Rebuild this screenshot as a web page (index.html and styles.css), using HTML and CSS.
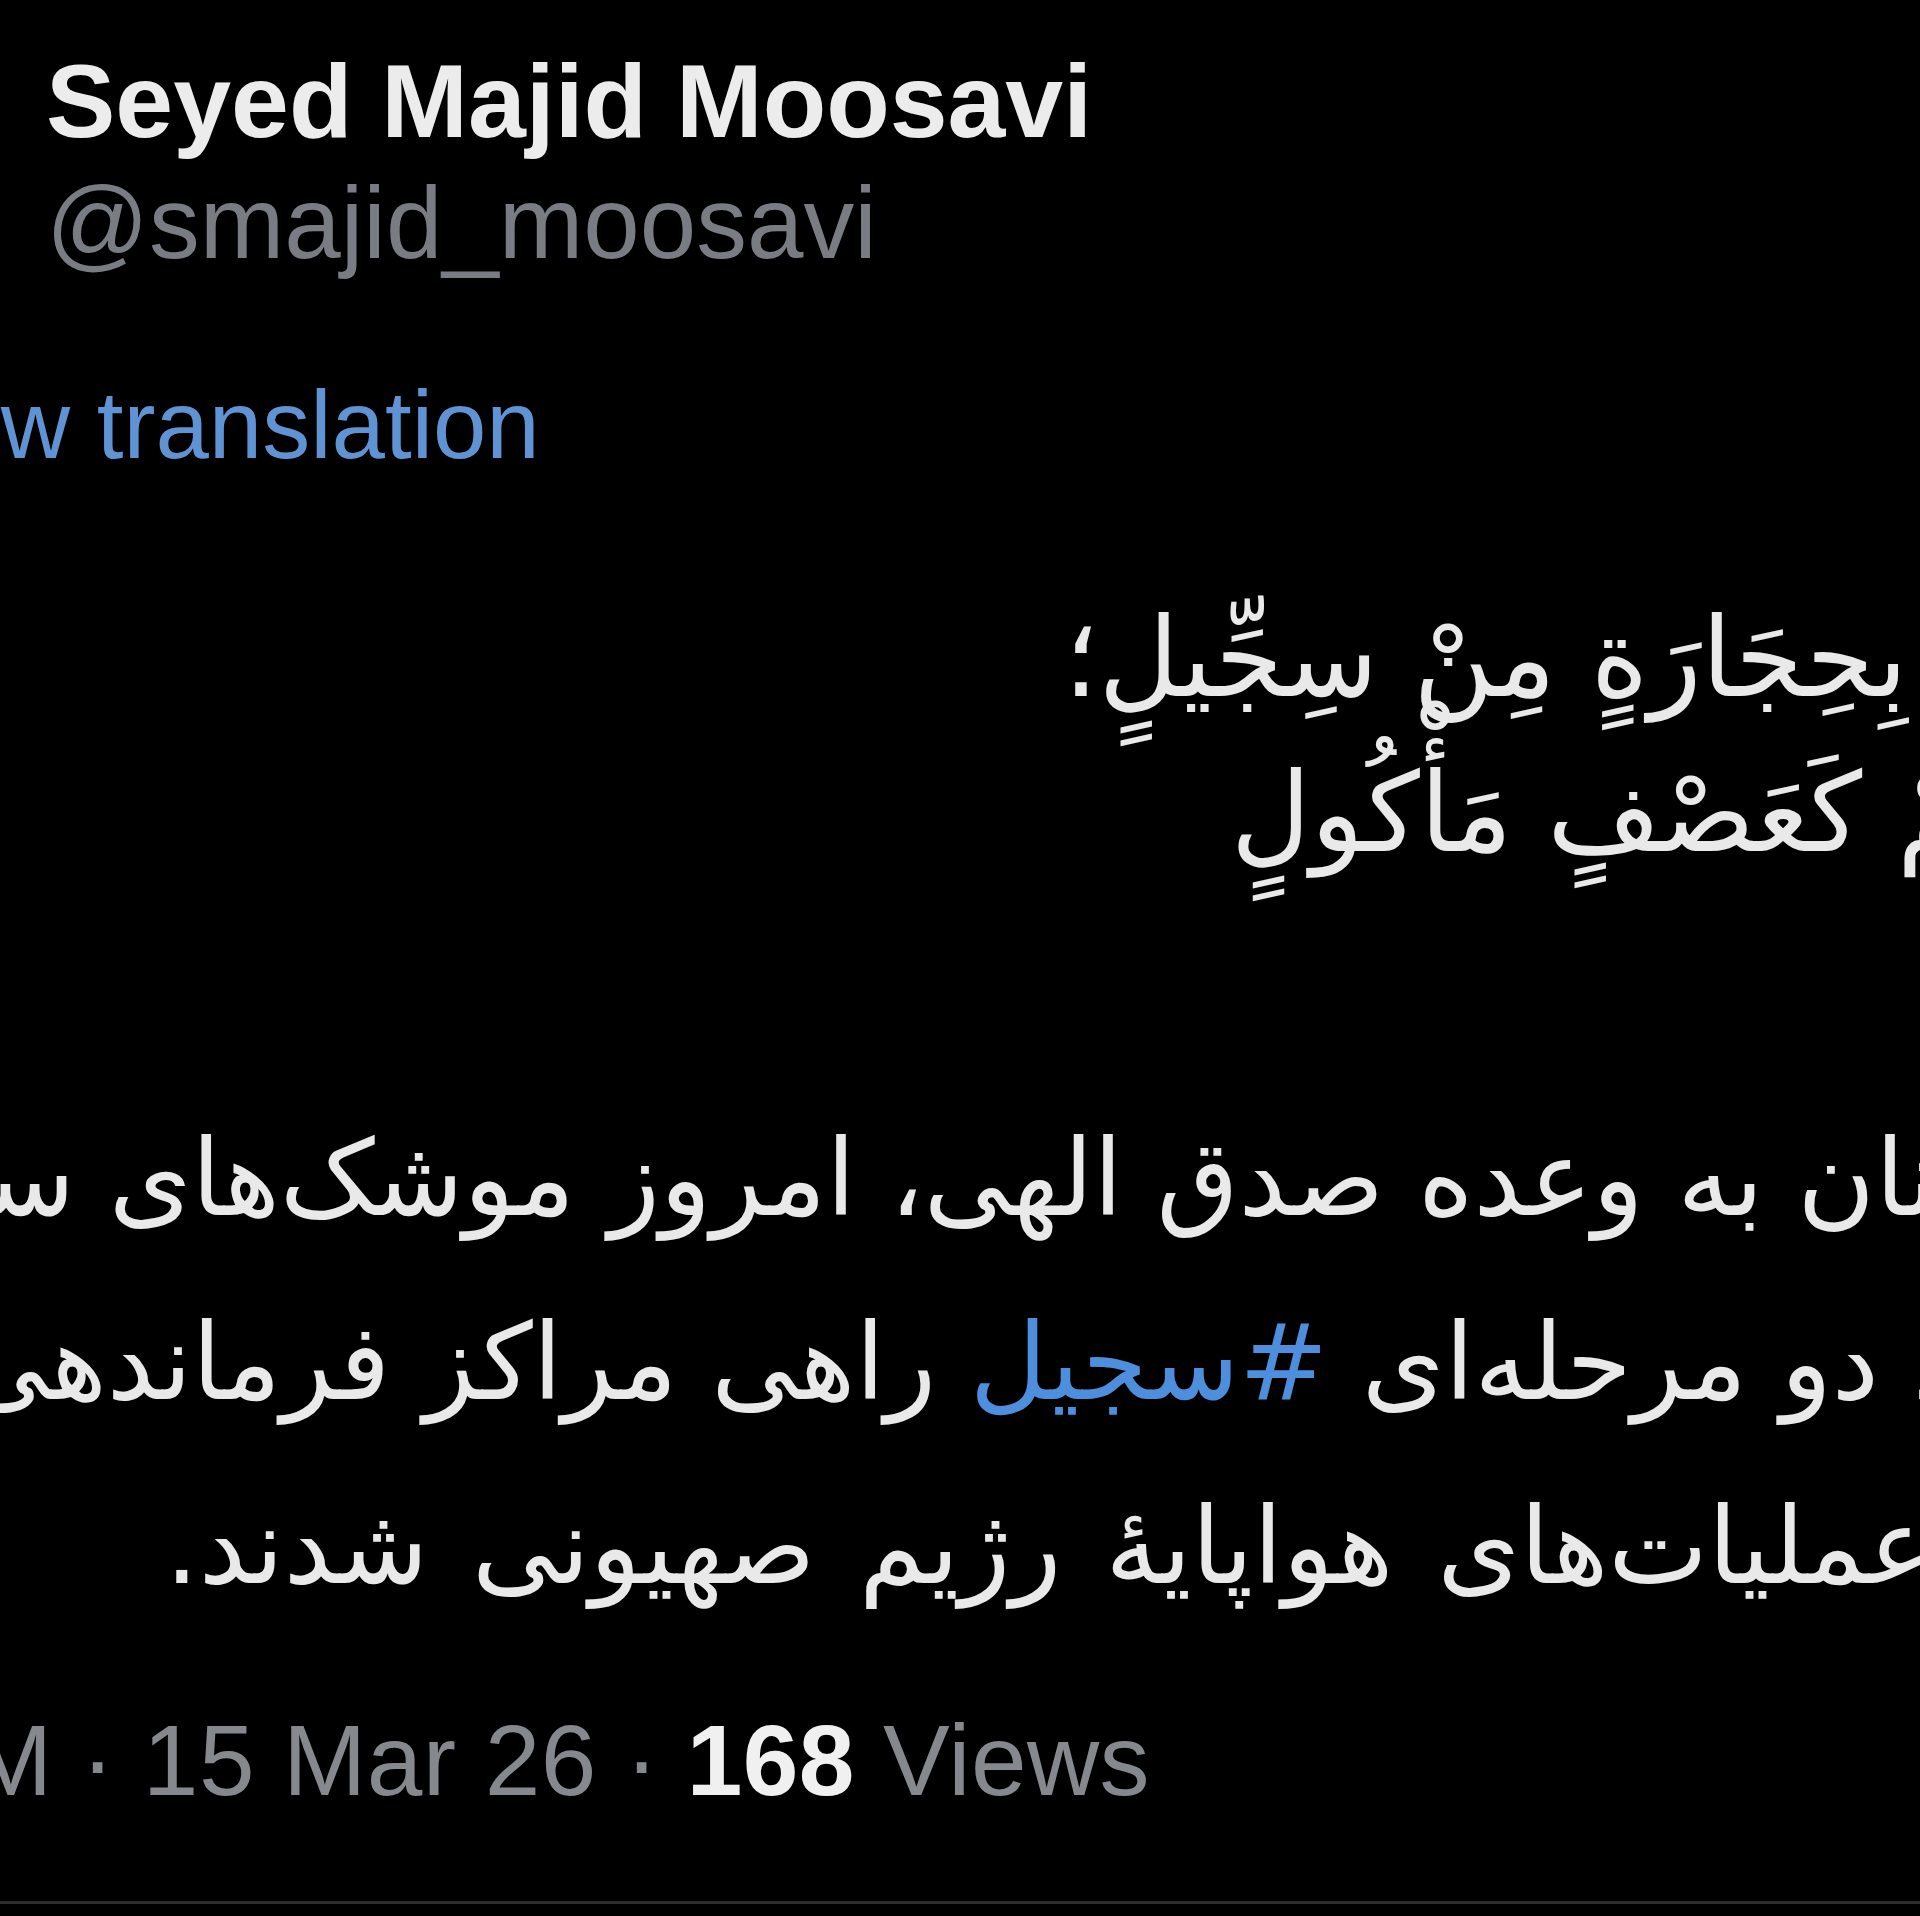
FILE: index.html
```html
<!DOCTYPE html>
<html lang="fa">
<head>
<meta charset="utf-8">
<title>Seyed Majid Moosavi</title>
<link rel="stylesheet" href="styles.css">
</head>
<body>
<main class="screen">
  <header class="author">
    <div class="name" lang="en">Seyed Majid Moosavi</div>
    <div class="handle" lang="en">@smajid_moosavi</div>
  </header>
  <div class="translate" lang="en">Show translation</div>
  <section class="verse">
    <div class="rline verse-1">تَرْمِيهِمْ بِحِجَارَةٍ مِنْ سِجِّيلٍ؛</div>
    <div class="rline verse-2">فَجَعَلَهُمْ كَعَصْفٍ مَأْكُولٍ</div>
  </section>
  <section class="para">
    <div class="rline para-1">با اطمینان به وعده صدق الهی، امروز موشک‌های سوخت</div>
    <div class="rline para-2">جامدِ دو مرحله‌ای <span class="tag">#سجیل</span> راهی مراکز فرماندهی</div>
    <div class="rline para-3">عملیات‌های هواپایهٔ رژیم صهیونی شدند.</div>
  </section>
  <div class="meta" lang="en">PM · 15 Mar 26 · <b class="views">168</b> Views</div>
  <div class="divider"></div>
</main>
</body>
</html>
```

FILE: styles.css
```css
html, body {
  margin: 0;
  padding: 0;
  background: #000;
}

.screen {
  width: 1920px;
  height: 1916px;
  overflow: hidden;
  background: #000;
  color: #e7e9ea;
  font-family: "Liberation Sans", Arial, sans-serif;
  padding-top: 41px;
  box-sizing: border-box;
}

.author {
  padding-left: 46px;
}

.name {
  font-size: 104px;
  line-height: 120px;
  font-weight: 700;
  color: #ececec;
  white-space: nowrap;
}

.handle {
  margin-top: 2px;
  font-size: 101.5px;
  line-height: 120px;
  color: #797d83;
  white-space: nowrap;
}

.translate {
  margin-top: 87px;
  margin-left: -170px;
  font-size: 96px;
  line-height: 110px;
  color: #5f93d3;
  white-space: nowrap;
}

.rline {
  direction: rtl;
  white-space: nowrap;
  font-family: "DejaVu Sans", sans-serif;
}

.verse {
  margin-top: 101px;
  font-size: 110px;
  line-height: 155px;
  color: #e9e9e9;
}

.verse-1 { margin-right: -330px; }
.verse-2 { margin-right: -314px; }

.para {
  margin-top: 196px;
  font-size: 106px;
  line-height: 184px;
  color: #e9e9e9;
}

.para-1 { margin-right: -322px; }
.para-2 { margin-right: -203px; }
.para-3 {
  margin-right: -12px;
  word-spacing: 10px;
}

.tag {
  color: #4d8fdc;
}

.meta {
  margin-top: 66px;
  margin-left: -98px;
  font-size: 100px;
  line-height: 110px;
  letter-spacing: 0.4px;
  color: #85888d;
  white-space: nowrap;
}

.views {
  color: #f0f0f0;
  font-weight: 700;
}

.divider {
  margin-top: 86px;
  height: 3px;
  background: #2a2c2e;
}
```
